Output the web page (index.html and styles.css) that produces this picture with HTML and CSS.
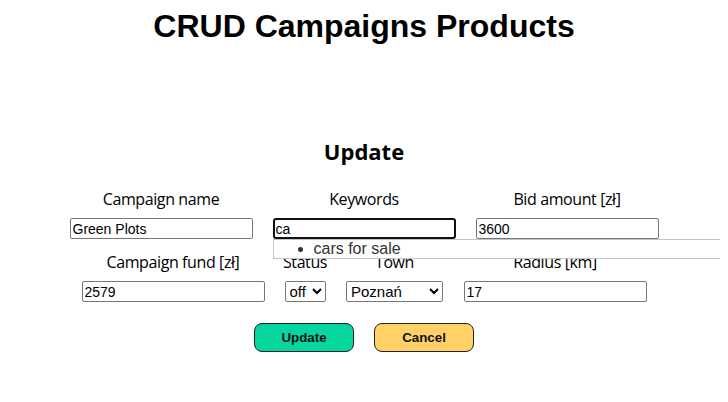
FILE: index.html
```html
<!DOCTYPE html>
<html lang="pl">
<head>
<meta charset="utf-8">
<title>CRUD Campaigns Products</title>
<link rel="stylesheet" href="styles.css">
</head>
<body>
<h1 class="title">CRUD Campaigns Products</h1>
<section class="editor">
  <h2 class="editor-title">Update</h2>
  <form class="form">
    <div class="row">
      <div class="field field-wide">
        <label class="field-label">Campaign name</label>
        <input class="text-input" type="text" value="Green Plots">
      </div>
      <div class="field field-wide field-keywords">
        <label class="field-label">Keywords</label>
        <input class="text-input is-focused" type="text" value="ca">
        <ul class="suggestions">
          <li class="suggestion">cars for sale</li>
        </ul>
      </div>
      <div class="field field-wide">
        <label class="field-label">Bid amount [zł]</label>
        <input class="text-input" type="text" value="3600">
      </div>
    </div>
    <div class="row">
      <div class="field field-wide">
        <label class="field-label">Campaign fund [zł]</label>
        <input class="text-input" type="text" value="2579">
      </div>
      <div class="field field-status">
        <label class="field-label">Status</label>
        <select class="select select-status">
          <option>off</option>
          <option>on</option>
        </select>
      </div>
      <div class="field field-town">
        <label class="field-label">Town</label>
        <select class="select select-town">
          <option>Poznań</option>
          <option>Warszawa</option>
          <option>Kraków</option>
        </select>
      </div>
      <div class="field field-wide">
        <label class="field-label">Radius [km]</label>
        <input class="text-input" type="text" value="17">
      </div>
    </div>
    <div class="actions">
      <button class="btn btn-update" type="button">Update</button>
      <button class="btn btn-cancel" type="button">Cancel</button>
    </div>
  </form>
</section>
</body>
</html>
```
FILE: styles.css
```css
body {
  margin: 8px;
  background: #fff;
  color: #000;
  font-family: "Liberation Sans", Arial, sans-serif;
}

.title {
  margin: 0;
  font-size: 32px;
  line-height: 37px;
  font-weight: 700;
  text-align: center;
}

.editor-title {
  margin: 91px 0 22px;
  font-family: "Open Sans", "Noto Sans", sans-serif;
  font-size: 22px;
  line-height: 30px;
  font-weight: 700;
  text-align: center;
}

.form {
  display: flex;
  flex-direction: column;
  gap: 12px;
}

.row {
  display: flex;
  justify-content: center;
  gap: 20px;
}

.field {
  position: relative;
  display: flex;
  flex-direction: column;
  align-items: center;
  gap: 8px;
}

.field-wide {
  width: 183px;
}

.field-status {
  width: 41px;
}

.field-town {
  width: 98px;
}

.field-label {
  font-family: "Open Sans", "Noto Sans", sans-serif;
  font-size: 16px;
  line-height: 22px;
  letter-spacing: -0.4px;
  white-space: nowrap;
}

.text-input {
  box-sizing: border-box;
  width: 183px;
  height: 21px;
  margin: 0;
  padding: 0 2px;
  border: 1px solid #767676;
  border-radius: 2px;
  font-family: "Liberation Sans", Arial, sans-serif;
  font-size: 14px;
  color: #000;
  background: #fff;
}

.text-input.is-focused {
  border: 2px solid #101010;
  border-radius: 3px;
  padding: 0 1px;
  outline: none;
}

.suggestions {
  position: absolute;
  left: 0;
  top: 100%;
  z-index: 5;
  box-sizing: border-box;
  width: 455px;
  margin: 0;
  padding: 0 0 0 40px;
  border: 1px solid #c4c4c4;
  border-right: none;
  background: #fff;
  list-style: disc;
  font-family: "Liberation Sans", Arial, sans-serif;
  font-size: 16px;
  line-height: 18px;
  color: #333;
}

.select {
  box-sizing: border-box;
  height: 21px;
  margin: 0;
  font-family: "Liberation Sans", Arial, sans-serif;
  font-size: 15px;
  color: #000;
}

.select-status {
  width: 41px;
}

.select-town {
  width: 97px;
}

.actions {
  display: flex;
  justify-content: center;
  gap: 20px;
  margin-top: 9px;
}

.btn {
  box-sizing: border-box;
  width: 100px;
  height: 29px;
  border: 1px solid #222;
  border-radius: 8px;
  font-family: "Liberation Sans", Arial, sans-serif;
  font-size: 13.33px;
  font-weight: 700;
  color: #111;
  cursor: pointer;
}

.btn-update {
  background: #06d6a0;
}

.btn-cancel {
  background: #ffd166;
}
```
